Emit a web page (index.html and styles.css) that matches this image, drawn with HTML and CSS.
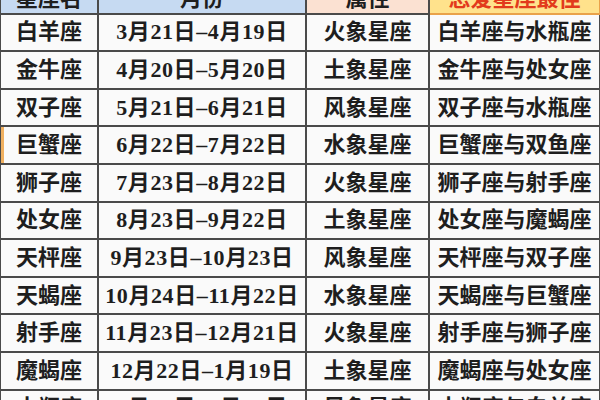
FILE: index.html
```html
<!DOCTYPE html>
<html lang="zh">
<head>
<meta charset="utf-8">
<link rel="stylesheet" href="styles.css">
</head>
<body>
<div class="frame">
<table class="zodiac">
  <colgroup>
    <col class="c1"><col class="c2"><col class="c3"><col class="c4">
  </colgroup>
  <thead>
    <tr>
      <th class="h-blue">星座名</th>
      <th class="h-blue">月份</th>
      <th class="h-pink">属性</th>
      <th class="h-gold">恋爱星座最佳</th>
    </tr>
  </thead>
  <tbody>
    <tr><td>白羊座</td><td class="date">3月21日–4月19日</td><td>火象星座</td><td>白羊座与水瓶座</td></tr>
    <tr><td>金牛座</td><td class="date">4月20日–5月20日</td><td>土象星座</td><td>金牛座与处女座</td></tr>
    <tr><td>双子座</td><td class="date">5月21日–6月21日</td><td>风象星座</td><td>双子座与水瓶座</td></tr>
    <tr><td class="mark">巨蟹座</td><td class="date">6月22日–7月22日</td><td>水象星座</td><td>巨蟹座与双鱼座</td></tr>
    <tr><td>狮子座</td><td class="date">7月23日–8月22日</td><td>火象星座</td><td>狮子座与射手座</td></tr>
    <tr><td>处女座</td><td class="date">8月23日–9月22日</td><td>土象星座</td><td>处女座与魔蝎座</td></tr>
    <tr><td>天枰座</td><td class="date">9月23日–10月23日</td><td>风象星座</td><td>天枰座与双子座</td></tr>
    <tr><td>天蝎座</td><td class="date">10月24日–11月22日</td><td>水象星座</td><td>天蝎座与巨蟹座</td></tr>
    <tr><td>射手座</td><td class="date">11月23日–12月21日</td><td>火象星座</td><td>射手座与狮子座</td></tr>
    <tr><td>魔蝎座</td><td class="date">12月22日–1月19日</td><td>土象星座</td><td>魔蝎座与处女座</td></tr>
    <tr><td>水瓶座</td><td class="date">1月20日–2月18日</td><td>风象星座</td><td>水瓶座与白羊座</td></tr>
  </tbody>
</table>
</div>
</body>
</html>
```
FILE: styles.css
```css
html, body {
  margin: 0;
  padding: 0;
  background: #f7f7f7;
}
.frame {
  width: 600px;
  height: 400px;
  overflow: hidden;
}
.zodiac {
  border-collapse: collapse;
  table-layout: fixed;
  width: 600px;
  margin-top: -28px;
  margin-left: -1px;
  font-family: "Liberation Serif", "Noto Sans CJK SC", serif;
  font-size: 22px;
  color: #1e1e1e;
}
.c1 { width: 98px; }
.c2 { width: 208px; }
.c3 { width: 123px; }
.c4 { width: 171px; }
.zodiac th,
.zodiac td {
  border: 2px solid #4a4a4a;
  height: 35.6px;
  padding: 0;
  text-align: center;
  vertical-align: middle;
  white-space: nowrap;
  background: #fafafa;
  line-height: 1;
  font-weight: 700;
}
.zodiac th {
  vertical-align: bottom;
  padding-bottom: 3px;
}
.zodiac td.date {
  letter-spacing: 0.6px;
}
.h-blue { background: #c6daf2 !important; }
.h-pink { background: #fbe1d2 !important; }
.h-gold {
  background: #ffe28c !important;
  color: #e23a1c;
  border-color: #e9a24a !important;
}
.mark {
  box-shadow: inset 3px 0 0 #f0b060;
}
```
